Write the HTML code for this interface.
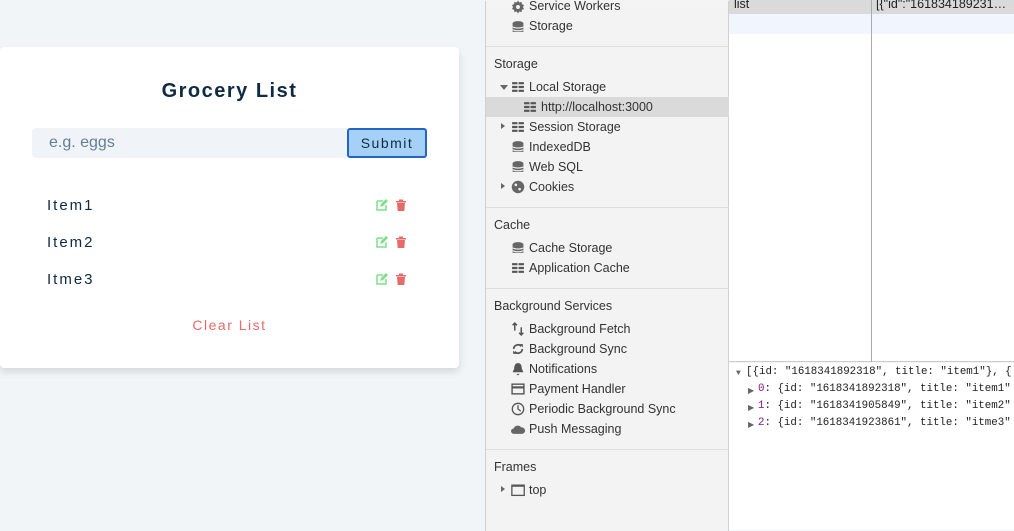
<!DOCTYPE html>
<html><head><meta charset="utf-8"><style>
*{margin:0;padding:0;box-sizing:border-box}
body{width:1014px;height:530px;overflow:hidden;position:relative;background:#f1f5f8;font-family:"Liberation Sans",sans-serif}
.card{position:absolute;left:0;top:47px;width:459px;height:321px;background:#fff;border-radius:4px;box-shadow:0 4px 8px rgba(0,0,0,.12)}
.t{position:absolute;white-space:nowrap}
.item{position:absolute;left:47px;font-size:15px;letter-spacing:2px;color:#102a43}
.ico{position:absolute;left:376px}
.side{position:absolute;left:485px;top:1px;width:244px;height:530px;background:#f3f3f3;border-left:1px solid #d0d0d0;border-right:1px solid #d0d0d0;font-size:12.5px;color:#333}
.side .t{left:43px}
.side .h{left:8px}
.div{position:absolute;left:0;width:243px;height:1px;background:#ddd}
.i{position:absolute;left:25px;width:14px;height:14px}
.tri{position:absolute;left:15px;width:0;height:0;border-top:3.5px solid transparent;border-bottom:3.5px solid transparent;border-left:4.5px solid #666}
.mono{font-family:"Liberation Mono",monospace;font-size:10.8px;color:#222}
</style></head><body>
<div class="card">
<div class="t" style="left:0;width:459px;text-align:center;top:33px;font-size:20px;font-weight:bold;letter-spacing:1.5px;color:#102a43">Grocery List</div>
<div style="position:absolute;left:32px;top:81px;width:315px;height:30px;background:#f0f4f8;border-radius:4px 0 0 4px"></div>
<div class="t" style="left:49px;top:87px;font-size:16px;color:#627d98">e.g. eggs</div>
<div style="position:absolute;left:347px;top:81px;width:80px;height:30px;background:#a6d1f7;border:2px solid #2364c7;border-radius:3px;font-size:14px;letter-spacing:1.5px;text-align:center;line-height:26px;color:#102a43">Submit</div>
<div class="item" style="top:150px">Item1</div>
<div class="item" style="top:187px">Item2</div>
<div class="item" style="top:224px">Itme3</div>
<svg class="ico" style="top:152px" width="34" height="12" viewBox="0 0 34 12"><path d="M1 2h6M1 2v9h9V6" stroke="#7ce08a" stroke-width="1.5" fill="none"/><path d="M4 8l1-3 5-5 2 2-5 5z" fill="#7ce08a"/><rect x="20" y="2" width="10" height="1.5" fill="#e66a6a"/><rect x="23" y="0.5" width="4" height="2" fill="#e66a6a"/><path d="M21 4h8l-.7 8h-6.6z" fill="#e66a6a"/></svg>
<svg class="ico" style="top:189px" width="34" height="12" viewBox="0 0 34 12"><path d="M1 2h6M1 2v9h9V6" stroke="#7ce08a" stroke-width="1.5" fill="none"/><path d="M4 8l1-3 5-5 2 2-5 5z" fill="#7ce08a"/><rect x="20" y="2" width="10" height="1.5" fill="#e66a6a"/><rect x="23" y="0.5" width="4" height="2" fill="#e66a6a"/><path d="M21 4h8l-.7 8h-6.6z" fill="#e66a6a"/></svg>
<svg class="ico" style="top:226px" width="34" height="12" viewBox="0 0 34 12"><path d="M1 2h6M1 2v9h9V6" stroke="#7ce08a" stroke-width="1.5" fill="none"/><path d="M4 8l1-3 5-5 2 2-5 5z" fill="#7ce08a"/><rect x="20" y="2" width="10" height="1.5" fill="#e66a6a"/><rect x="23" y="0.5" width="4" height="2" fill="#e66a6a"/><path d="M21 4h8l-.7 8h-6.6z" fill="#e66a6a"/></svg>
<div class="t" style="left:0;width:459px;text-align:center;top:270px;font-size:14px;letter-spacing:1.5px;color:#e66a6a">Clear List</div>
</div>

<div class="side">
<svg class="i" style="top:-1px" viewBox="0 0 13 13"><path d="M6.5 0.5l1.2 1.8 2.1-.6.3 2.1 2 .9-1 1.8 1 1.8-2 .9-.3 2.1-2.1-.6-1.2 1.8-1.2-1.8-2.1.6-.3-2.1-2-.9 1-1.8-1-1.8 2-.9.3-2.1 2.1.6z" fill="#666"/><circle cx="6.5" cy="6.5" r="1.8" fill="#f3f3f3"/></svg>
<div class="t" style="top:-2px">Service Workers</div>
<svg class="i" style="top:19px" viewBox="0 0 13 13"><ellipse cx="6.5" cy="3" rx="5" ry="2" fill="#666"/><rect x="1.5" y="3" width="10" height="8" fill="#666"/><path d="M1.5 6.5q5 2 10 0M1.5 9q5 2 10 0" stroke="#f3f3f3" fill="none"/></svg>
<div class="t" style="top:18px">Storage</div>
<div class="div" style="top:45px"></div>
<div class="t h" style="top:56px">Storage</div>
<div style="position:absolute;left:14px;top:84px;border-left:4px solid transparent;border-right:4px solid transparent;border-top:5px solid #666"></div>
<svg class="i" style="top:79px" viewBox="0 0 13 13"><path d="M1 2h5v2H1zM7 2h5v2H7zM1 5.5h5v2H1zM7 5.5h5v2H7zM1 9h5v2H1zM7 9h5v2H7z" fill="#555"/></svg>
<div class="t" style="top:79px">Local Storage</div>
<div style="position:absolute;left:0;top:96px;width:243px;height:20px;background:#dadada"></div>
<svg class="i" style="top:99px;left:37px" viewBox="0 0 13 13"><path d="M1 2h5v2H1zM7 2h5v2H7zM1 5.5h5v2H1zM7 5.5h5v2H7zM1 9h5v2H1zM7 9h5v2H7z" fill="#555"/></svg>
<div class="t" style="top:99px;left:55px">http://localhost:3000</div>
<div class="tri" style="top:122px"></div>
<svg class="i" style="top:119px" viewBox="0 0 13 13"><path d="M1 2h5v2H1zM7 2h5v2H7zM1 5.5h5v2H1zM7 5.5h5v2H7zM1 9h5v2H1zM7 9h5v2H7z" fill="#555"/></svg>
<div class="t" style="top:119px">Session Storage</div>
<svg class="i" style="top:139px" viewBox="0 0 13 13"><ellipse cx="6.5" cy="3" rx="5" ry="2" fill="#666"/><rect x="1.5" y="3" width="10" height="8" fill="#666"/><path d="M1.5 6.5q5 2 10 0M1.5 9q5 2 10 0" stroke="#f3f3f3" fill="none"/></svg>
<div class="t" style="top:139px">IndexedDB</div>
<svg class="i" style="top:159px" viewBox="0 0 13 13"><ellipse cx="6.5" cy="3" rx="5" ry="2" fill="#666"/><rect x="1.5" y="3" width="10" height="8" fill="#666"/><path d="M1.5 6.5q5 2 10 0M1.5 9q5 2 10 0" stroke="#f3f3f3" fill="none"/></svg>
<div class="t" style="top:159px">Web SQL</div>
<div class="tri" style="top:182px"></div>
<svg class="i" style="top:179px" viewBox="0 0 13 13"><circle cx="6.5" cy="6.5" r="5.8" fill="#666"/><circle cx="4.5" cy="4.5" r="1.2" fill="#f3f3f3"/><circle cx="8" cy="8.5" r="1.2" fill="#f3f3f3"/></svg>
<div class="t" style="top:179px">Cookies</div>
<div class="div" style="top:206px"></div>
<div class="t h" style="top:217px">Cache</div>
<svg class="i" style="top:240px" viewBox="0 0 13 13"><ellipse cx="6.5" cy="3" rx="5" ry="2" fill="#666"/><rect x="1.5" y="3" width="10" height="8" fill="#666"/><path d="M1.5 6.5q5 2 10 0M1.5 9q5 2 10 0" stroke="#f3f3f3" fill="none"/></svg>
<div class="t" style="top:240px">Cache Storage</div>
<svg class="i" style="top:260px" viewBox="0 0 13 13"><path d="M1 2h5v2H1zM7 2h5v2H7zM1 5.5h5v2H1zM7 5.5h5v2H7zM1 9h5v2H1zM7 9h5v2H7z" fill="#555"/></svg>
<div class="t" style="top:260px">Application Cache</div>
<div class="div" style="top:287px"></div>
<div class="t h" style="top:298px">Background Services</div>
<svg class="i" style="top:321px" viewBox="0 0 13 13"><path d="M3.5 1v7M1.5 3l2-2 2 2M9.5 5v7M7.5 10l2 2 2-2" stroke="#555" stroke-width="1.4" fill="none"/></svg>
<div class="t" style="top:321px">Background Fetch</div>
<svg class="i" style="top:341px" viewBox="0 0 13 13"><path d="M2.5 6.5a4 4 0 0 1 7-2.5M10.5 6.5a4 4 0 0 1-7 2.5" stroke="#555" stroke-width="1.6" fill="none"/><path d="M8 2l3 0 0 3zM5 11l-3 0 0-3z" fill="#555"/></svg>
<div class="t" style="top:341px">Background Sync</div>
<svg class="i" style="top:361px" viewBox="0 0 13 13"><path d="M6.5 1c-3 0-3.5 3-3.5 5l-1.5 3.5h10l-1.5-3.5c0-2-.5-5-3.5-5zM5 11h3l-1.5 1.5z" fill="#555"/></svg>
<div class="t" style="top:361px">Notifications</div>
<svg class="i" style="top:381px" viewBox="0 0 13 13"><rect x="1" y="2" width="11" height="9" fill="none" stroke="#555" stroke-width="1.3"/><rect x="1" y="4" width="11" height="2" fill="#555"/></svg>
<div class="t" style="top:381px">Payment Handler</div>
<svg class="i" style="top:401px" viewBox="0 0 13 13"><circle cx="6.5" cy="6.5" r="5.3" fill="none" stroke="#555" stroke-width="1.2"/><path d="M6.5 3v3.5l2.5 2" stroke="#555" stroke-width="1.2" fill="none"/></svg>
<div class="t" style="top:401px">Periodic Background Sync</div>
<svg class="i" style="top:421px" viewBox="0 0 13 13"><path d="M2.5 11a2.5 2.5 0 0 1 0-5 4 4 0 0 1 7-1 3 3 0 0 1 1 6z" fill="#666"/></svg>
<div class="t" style="top:421px">Push Messaging</div>
<div class="div" style="top:448px"></div>
<div class="t h" style="top:459px">Frames</div>
<div class="tri" style="top:485px"></div>
<svg class="i" style="top:482px" viewBox="0 0 13 13"><rect x="0.8" y="2" width="11.5" height="9.5" fill="none" stroke="#555" stroke-width="1.2"/><rect x="0.8" y="2" width="11.5" height="1.5" fill="#555"/></svg>
<div class="t" style="top:482px">top</div>
</div>

<div style="position:absolute;left:729px;top:0;width:285px;height:362px;background:#fff;border-bottom:1px solid #ccc"></div>
<div style="position:absolute;left:729px;top:0;width:285px;height:14px;background:#dadada"></div>
<div style="position:absolute;left:729px;top:14px;width:285px;height:20px;background:#f0f5fe"></div>
<div style="position:absolute;left:871px;top:0;width:1px;height:362px;background:#aaa"></div>
<div class="t" style="left:734px;top:-3px;font-size:12.5px;color:#222">list</div>
<div class="t" style="left:876px;top:-3px;font-size:12.5px;color:#222;width:138px;overflow:hidden">[{"id":"161834189231…</div>
<div style="position:absolute;left:729px;top:363px;width:285px;height:167px;background:#fff"></div>
<div class="t mono" style="left:736px;top:369px;font-size:8px;color:#666">▼</div>
<div class="t mono" style="left:746px;top:366px">[{id: "1618341892318", title: "item1"}, {</div>
<div class="t mono" style="left:748px;top:386px;font-size:8px;color:#666">▶</div>
<div class="t mono" style="left:758px;top:383px"><span style="color:#881280">0</span>: {id: "1618341892318", title: "item1"</div>
<div class="t mono" style="left:748px;top:403px;font-size:8px;color:#666">▶</div>
<div class="t mono" style="left:758px;top:400px"><span style="color:#881280">1</span>: {id: "1618341905849", title: "item2"</div>
<div class="t mono" style="left:748px;top:420px;font-size:8px;color:#666">▶</div>
<div class="t mono" style="left:758px;top:417px"><span style="color:#881280">2</span>: {id: "1618341923861", title: "itme3"</div>
</body></html>
